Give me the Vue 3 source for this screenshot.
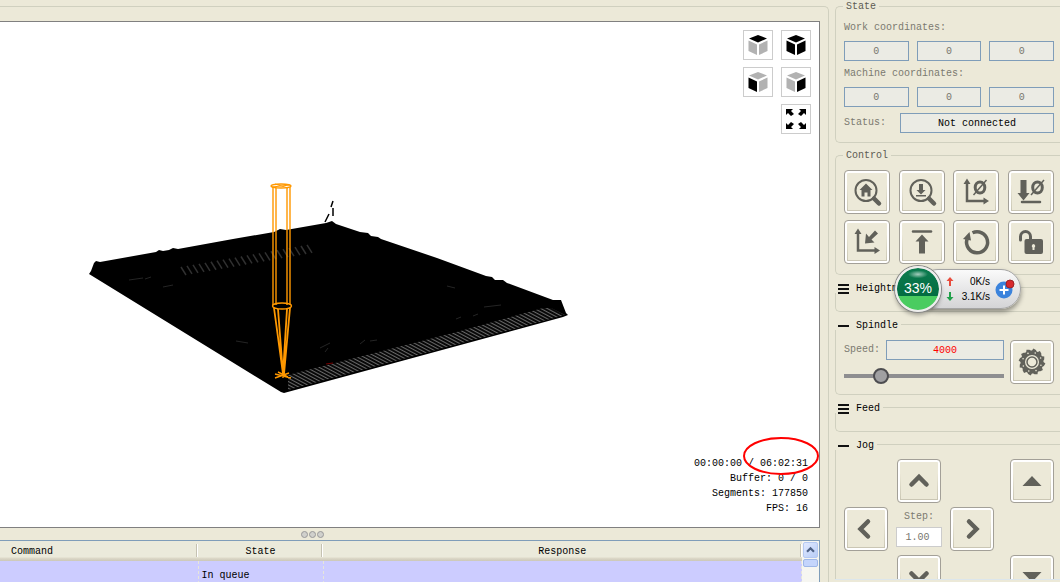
<script setup>
import { ref } from 'vue'

const work = ref(['0', '0', '0'])
const machine = ref(['0', '0', '0'])
const status = ref('Not connected')
const speed = ref('4000')
const speedPos = ref(20)
const step = ref('1.00')
const axes = ['X', 'Y', 'Z']

const teeth = Array.from({ length: 12 }, (_, i) => {
  const p = (r, d) => {
    const a = ((i * 30 + d) * Math.PI) / 180
    return (22 + r * Math.cos(a)).toFixed(1) + ',' + (22 + r * Math.sin(a)).toFixed(1)
  }
  return p(11.5, 0) + ' ' + p(13.5, 6) + ' ' + p(12.5, 18) + ' ' + p(11.5, 24)
}).join(' ')
const holes = Array.from({ length: 8 }, (_, i) => {
  const a = ((i * 45 + 20) * Math.PI) / 180
  return { x: 22 + 9.5 * Math.cos(a), y: 22 + 9.5 * Math.sin(a) }
})
const marks = Array.from({ length: 22 }, (_, i) => {
  const x = 181 + i * 6
  const y = 267 - i * 1.05
  return `M${x} ${y}l5 8`
}).join('')
</script>

<template>
  <div class="app">
    <main class="main">
      <div class="group">
        <section class="viewport">
          <svg class="scene" viewBox="0 22 819 505" aria-hidden="true">
            <defs>
              <pattern id="hatch" width="4" height="3" patternUnits="userSpaceOnUse" patternTransform="rotate(28)">
                <rect width="4" height="3" fill="#080808" />
                <rect width="4" height="1" fill="#686868" />
              </pattern>
            </defs>
            <path d="M89 274L91 271 94 263 96 261 100 262 156 252 159 250 163 251 169 250 173 248 178 249 233 239 274 232 280 229 286 230 326 223 332 221 336 224 360 232 368 233 371 236 378 237 381 239 437 258 486 276 492 277 495 280 503 280 507 283 553 300 561 300 566 313 568 315 563 317 284 393 281 392z" fill="#000" />
            <path d="M288 375L453 333 543 308 551 308 565 315 288 390z" fill="url(#hatch)" />
            <path :d="marks" stroke="#303030" stroke-width="1.5" />
            <path d="M129 280l14-2M145 279l6-2M163 287l10-2M236 341l12 2M320 348l10-5M325 352l3-4M447 286l8 2M456 319l5-2M473 316l5-2M484 307l17-2M360 344l5-4M370 341l7-1" stroke="#252525" />
            <path d="M325 222l4-8M331 207l2-6M333 208v8" stroke="#000" stroke-width="1.5" />
            <path d="M326 364l7-1" stroke="#700" />
            <g fill="none" stroke="#ff9800" stroke-width="1.4">
              <ellipse cx="281" cy="186" rx="10" ry="2" />
              <path d="M272 187l18-2M275 184l13 4" stroke-width="1" />
              <path d="M273 187V305M276 188V305M287 188V305M290 187V305" />
              <ellipse cx="282" cy="306" rx="9.5" ry="3" />
              <path d="M274 308l9 66M278 309l5 65M287 309l-4 65M290 308l-6 66" stroke-width="1.8" />
              <path d="M275 374l16 4M275 378l14-5M283 370v8M278 372l10 5" />
            </g>
          </svg>

          <div class="views">
            <button class="view" aria-label="Top view"><svg viewBox="0 0 28 28"><path d="M14 4l9 3.500-9 4-9-4z" fill="#000" /><path d="M4.500 9.500l8.500 4v10.500l-8.500-4z M23.500 9.500l-8.500 4v10.500l8.500-4z" fill="#b2b2b2" /></svg></button>
            <button class="view" aria-label="Isometric view"><svg viewBox="0 0 28 28"><path d="M14 4l9 3.500-9 4-9-4z M4.500 9.500l8.500 4v10.500l-8.500-4z M23.500 9.500l-8.500 4v10.500l8.500-4z" fill="#000" /></svg></button>
            <button class="view" aria-label="Front view"><svg viewBox="0 0 28 28"><path d="M14 4l9 3.500-9 4-9-4z M23.500 9.500l-8.500 4v10.500l8.500-4z" fill="#b2b2b2" /><path d="M4.500 9.500l8.500 4v10.500l-8.500-4z" fill="#000" /></svg></button>
            <button class="view" aria-label="Left view"><svg viewBox="0 0 28 28"><path d="M14 4l9 3.500-9 4-9-4z M4.500 9.500l8.500 4v10.500l-8.500-4z" fill="#b2b2b2" /><path d="M23.500 9.500l-8.500 4v10.500l8.500-4z" fill="#000" /></svg></button>
            <button class="view fit" aria-label="Fit"><svg viewBox="0 0 28 28"><path d="M4 4h7l-2 2 3 3-3 2-3-3-2 2zM24 4h-7l2 2-3 3 3 2 3-3 2 2zM4 24h7l-2-2 3-3-3-2-3 3-2-2zM24 24h-7l2-2-3-3 3-2 3 3 2-2z" fill="#000" /></svg></button>
          </div>

          <div class="stats">
            <div>00:00:00 / 06:02:31</div>
            <div>Buffer: 0 / 0</div>
            <div>Segments: 177850</div>
            <div>FPS: 16</div>
          </div>
          <svg class="mark" viewBox="0 0 76 38" aria-hidden="true"><ellipse cx="38" cy="19" rx="37" ry="18" fill="none" stroke="#f00" stroke-width="2" /></svg>
        </section>

        <div class="splitter"><i></i><i></i><i></i></div>

        <section class="console">
          <table>
            <colgroup><col class="c1"><col class="c2"><col></colgroup>
            <thead><tr><th class="first">Command</th><th>State</th><th>Response</th></tr></thead>
            <tbody><tr><td></td><td>In queue</td><td></td></tr></tbody>
          </table>
          <div class="scroll">
            <button class="up" aria-label="Scroll up"><svg viewBox="0 0 15 15"><path d="M3.500 9.500l4-4 4 4" fill="none" stroke="#4d6185" stroke-width="2.500" /></svg></button>
            <div class="thumb"></div>
          </div>
        </section>
      </div>
    </main>

    <aside class="side">
      <fieldset>
        <legend>State</legend>
        <div class="caption">Work coordinates:</div>
        <div class="triple"><input v-for="(a, i) in axes" :key="a" v-model="work[i]" :aria-label="'Work ' + a" readonly></div>
        <div class="caption">Machine coordinates:</div>
        <div class="triple"><input v-for="(a, i) in axes" :key="a" v-model="machine[i]" :aria-label="'Machine ' + a" readonly></div>
        <div class="status"><label for="status">Status:</label><input id="status" v-model="status" class="dark" readonly></div>
      </fieldset>

      <fieldset class="control">
        <legend>Control</legend>
        <div class="buttons">
          <button class="btn" aria-label="Home"><svg viewBox="0 0 46 44"><circle cx="22" cy="20.500" r="10.500" class="s2" /><path d="M30 28.500l5 5" class="s4" /><path d="M22 13.500l6.500 6.500h-2v6.500h-3v-4h-3v4h-3v-6.500h-2z" /></svg></button>
          <button class="btn" aria-label="Z probe"><svg viewBox="0 0 46 44"><circle cx="22" cy="20.500" r="10.500" class="s2" /><path d="M30 28.500l5 5" class="s4" /><path d="M20 14h4v6h2.500l-4.500 4.500-4.500-4.500h2.500zM17 25h10v1.500h-10z" /></svg></button>
          <button class="btn" aria-label="Zero XY"><svg viewBox="0 0 46 44"><path d="M14 13v18h18" class="s25" /><path d="M14 8.500l3.500 5.500h-7zM36 31l-5.500 3.500v-7z" /><ellipse cx="27" cy="17.500" rx="4.800" ry="5.500" class="s3" /><path d="M20.500 25l13-15" class="s15" /></svg></button>
          <button class="btn" aria-label="Zero Z"><svg viewBox="0 0 46 44"><path d="M12.500 10h6v13h3l-6 7.500-6-7.500h3z" /><path d="M14 32h18" class="s25" /><ellipse cx="29.500" cy="17.500" rx="4.800" ry="5.500" class="s3" /><path d="M23 25l13-15" class="s15" /></svg></button>
          <button class="btn" aria-label="Restore origin"><svg viewBox="0 0 46 44"><path d="M14 13v17.500h18" class="s25" /><path d="M14 8.500l3.500 5.500h-7zM36 30.500l-5.500 3.500v-7z" /><path d="M31 10.500l3 3-6.500 6 3 3-9.500 1 1-10 3 3.500z" /></svg></button>
          <button class="btn" aria-label="Safe position"><svg viewBox="0 0 46 44"><path d="M14 11.500h18" class="s25" /><path d="M23 14.500l6.500 7h-3.500v12h-6v-12h-3.500z" /></svg></button>
          <button class="btn" aria-label="Reset"><svg viewBox="0 0 46 44"><path d="M19.500 12.800a10.500 10.500 0 1 1-5.500 6.500" class="s35" /><path d="M16.500 12l1.500 8.500-8-1.500z" /></svg></button>
          <button class="btn" aria-label="Unlock"><svg viewBox="0 0 46 44"><path d="M12.500 20v-3.500a5 5 0 0 1 10 0v5" class="s3" /><rect x="16.500" y="19" width="18.500" height="15" rx="2" /><path d="M25.500 24a2 2 0 0 1 1 3.500v2.500h-2v-2.500a2 2 0 0 1 1-3.500z" fill="#ece9d8" /></svg></button>
        </div>
      </fieldset>

      <fieldset class="fold closed">
        <legend><button class="toggle"><i class="bars"></i>Heightm</button></legend>
      </fieldset>

      <fieldset class="fold">
        <legend><button class="toggle"><i class="dash"></i>Spindle</button></legend>
        <div class="spindle">
          <div class="speed">
            <label for="speed">Speed:</label>
            <input id="speed" v-model="speed" class="red">
            <input v-model="speedPos" type="range" min="0" max="100" aria-label="Spindle speed">
          </div>
          <button class="btn sq" aria-label="Spindle on"><svg viewBox="0 0 44 44"><polygon :points="teeth" /><circle v-for="(h, i) in holes" :key="i" :cx="h.x" :cy="h.y" r="0.8" fill="#ece9d8" /><circle cx="22" cy="22" r="7" fill="#ece9d8" /><circle cx="22" cy="22" r="5" class="s15" /></svg></button>
        </div>
      </fieldset>

      <fieldset class="fold closed">
        <legend><button class="toggle"><i class="bars"></i>Feed</button></legend>
      </fieldset>

      <fieldset class="fold jogbox">
        <legend><button class="toggle"><i class="dash"></i>Jog</button></legend>
        <div class="jog">
          <button class="btn sq yp" aria-label="Y+"><svg viewBox="0 0 44 44"><path d="M14.500 25.500l7.500-7.500 7.500 7.500" class="s4" /></svg></button>
          <button class="btn sq zp" aria-label="Z+"><svg viewBox="0 0 44 44"><path d="M22 17l9.500 10h-19z" /></svg></button>
          <button class="btn sq xm" aria-label="X-"><svg viewBox="0 0 44 44"><path d="M24 14.500l-7.500 7.500 7.500 7.500" class="s4" /></svg></button>
          <div class="step"><label for="step">Step:</label><input id="step" v-model="step"></div>
          <button class="btn sq xp" aria-label="X+"><svg viewBox="0 0 44 44"><path d="M19 14.500l7.500 7.500-7.500 7.500" class="s4" /></svg></button>
          <button class="btn sq ym" aria-label="Y-"><svg viewBox="0 0 44 44"><path d="M14.500 18.500l7.500 7.500 7.500-7.500" class="s4" /></svg></button>
          <button class="btn sq zm" aria-label="Z-"><svg viewBox="0 0 44 44"><path d="M22 27l9.500-10h-19z" /></svg></button>
        </div>
      </fieldset>

      <div class="meter">
        <div class="ball">33%</div>
        <div class="rates">
          <svg viewBox="0 0 8 9"><path d="M4 0l3.500 4h-2.500v5h-2v-5h-2.500z" fill="#e84c3d" /></svg><span>0K/s</span>
          <svg viewBox="0 0 8 9"><path d="M4 9l3.500-4h-2.500v-5h-2v5h-2.500z" fill="#21a04b" /></svg><span>3.1K/s</span>
        </div>
        <svg class="plus" viewBox="0 0 20 20"><circle cx="9" cy="11" r="8.500" fill="#3b83dc" /><path d="M9 6.500v9M4.500 11h9" stroke="#fff" stroke-width="2" /><circle cx="15" cy="5" r="4" fill="#d8282c" stroke="#9c2126" /></svg>
      </div>
    </aside>
  </div>
</template>

<style>
html, body { margin: 0; overflow: hidden; }
</style>

<style scoped>
* { box-sizing: border-box; }
.app {
  height: 100vh;
  display: flex;
  background: #ece9d8;
  color: #000;
  font: 10px/12px "Liberation Mono", monospace;
  overflow: hidden;
}
button, input { font: inherit; color: inherit; margin: 0; padding: 0; }
svg { display: block; }
.main { flex: 1; min-width: 0; padding: 6px 6px 0 0; }
.group {
  height: 100%;
  display: flex;
  flex-direction: column;
  padding: 14px 8px 0 0;
  border-top: 1px solid #d0d0bf;
  border-right: 1px solid #d0d0bf;
  border-top-right-radius: 5px;
}
.viewport {
  flex: 1;
  min-height: 0;
  position: relative;
  background: #fff;
  border: 1px solid #808080;
  border-left: 0;
}
.scene { position: absolute; inset: 0; width: 100%; height: 100%; }
.views {
  position: absolute;
  top: 8px;
  right: 8px;
  display: grid;
  grid-template-columns: 30px 30px;
  gap: 7px 8px;
}
.view { width: 30px; height: 30px; border: 1px solid #ccc; background: #fff; }
.view svg { width: 28px; height: 28px; }
.fit { grid-column: 2; }
.stats { position: absolute; right: 11px; bottom: 11px; text-align: right; line-height: 15px; }
.mark { position: absolute; right: 0; bottom: 52px; width: 76px; height: 38px; }
.splitter { height: 12px; display: flex; align-items: center; gap: 1px; padding-left: 301px; }
.splitter i { width: 7px; height: 7px; border: 1px solid #999; border-radius: 50%; background: #d0d0cc; }
.console {
  flex: 0 0 42px;
  display: flex;
  align-items: flex-start;
  overflow: hidden;
  border-top: 1px solid #7f9db9;
  border-right: 1px solid #7f9db9;
}
table { flex: 1; table-layout: fixed; border-collapse: collapse; background: #ccf; }
.c1 { width: 198px; }
.c2 { width: 125px; }
th {
  height: 20px;
  padding: 2px 0 0;
  font-weight: normal;
  background: linear-gradient(#c5c2b2, #c5c2b2) right 1px top 3px / 1px 13px no-repeat, linear-gradient(#fff, #fff) right 0 top 3px / 1px 13px no-repeat, linear-gradient(#ebeadb 16px, #dedac9 17px, #cbc7b8 20px);
}
.first { text-align: left; padding-left: 11px; }
td { height: 28px; padding: 2px 0 0 3px; border-right: 1px dashed #e6e6da; }
.scroll { width: 17px; height: 42px; padding: 1px; background: #f6f6f1; }
.up { display: block; width: 15px; height: 16px; border: 1px solid #b5c9f2; border-radius: 2px; background: linear-gradient(135deg, #e0e9ff, #b8cdf7); }
.up svg { width: 13px; height: 14px; }
.thumb { height: 8px; margin-top: 1px; border: 1px solid #9eb7e8; border-radius: 2px; background: #c4d5fc; }

.side {
  width: 225px;
  height: calc(100vh - 2px);
  position: relative;
  display: flex;
  flex-direction: column;
  gap: 6px;
  overflow: hidden;
  border-bottom: 1px solid #dce6ec;
}
fieldset {
  flex: none;
  min-width: 0;
  margin: 0;
  padding: 10px 6px 9px 8px;
  border: 1px solid #d0d0bf;
  border-right: 0;
  border-radius: 5px 0 0 5px;
  color: #7b7a70;
}
legend { height: 12px; padding: 0 3px; margin-left: -1px; color: #5c5b53; line-height: 14px; }
.caption { margin-bottom: 7px; }
.triple { display: grid; grid-template-columns: repeat(3, 1fr); gap: 8px; margin-bottom: 7px; }
.triple:nth-of-type(4) { margin-bottom: 6px; }
input {
  min-width: 0;
  width: 100%;
  height: 20px;
  border: 1px solid #7f9db9;
  border-radius: 0;
  background: #ebebe4;
  color: #77766d;
  text-align: center;
}
.dark { color: #000; }
.red { color: #f00; }
.status { display: grid; grid-template-columns: 48px 1fr; gap: 8px; align-items: center; }
.control { padding-top: 9px; padding-bottom: 10px; }
.buttons { display: grid; grid-template-columns: repeat(4, 46px); justify-content: space-between; gap: 6px 0; }
.btn {
  position: relative;
  width: 46px;
  height: 44px;
  border: 1px solid #a3a098;
  border-radius: 4px;
  background: #ece9d8;
  box-shadow: inset 0 0 0 2px #fff;
}
.btn::after {
  content: "";
  position: absolute;
  inset: 2px;
  border: 1px solid #c9c5b2;
  border-top: 0;
  mask-image: linear-gradient(transparent 30%, #000);
}
.btn svg { margin: -1px; width: 46px; height: 44px; fill: #61615a; }
.btn.sq, .btn.sq svg { width: 44px; }
.s15, .s2, .s25, .s3, .s35, .s4 { fill: none; stroke: #61615a; }
.s15 { stroke-width: 1.5; }
.s2 { stroke-width: 2; }
.s25 { stroke-width: 2.5; stroke-linecap: round; }
.s3 { stroke-width: 3; stroke-linecap: round; }
.s35 { stroke-width: 3.5; }
.s4 { stroke-width: 4.5; stroke-linecap: round; }
.fold { padding-bottom: 10px; border-top-left-radius: 0; }
.jogbox { padding-top: 9px; }
.closed { padding: 18px 0 0; }
.fold legend { margin-left: -9px; }
.closed legend { margin-left: -1px; }
.toggle { display: flex; align-items: center; gap: 7px; border: 0; background: none; color: #000; line-height: 16px; }
.bars { width: 11px; height: 10px; background: linear-gradient(#111 2px, transparent 2px 4px, #111 4px 6px, transparent 6px 8px, #111 8px); }
.dash { width: 11px; height: 2px; background: #111; }
.spindle { display: flex; gap: 6px; }
.speed { flex: 1; display: grid; grid-template-columns: 34px 1fr; gap: 8px; align-items: center; }
input[type="range"] { grid-column: 1 / 3; height: 16px; border: 0; background: none; appearance: none; }
input[type="range"]::-webkit-slider-runnable-track { height: 4px; background: #8e8e90; }
input[type="range"]::-webkit-slider-thumb { appearance: none; width: 16px; height: 16px; margin-top: -6px; border: 2px solid #4d4d50; border-radius: 50%; background: #a0a0a2; }
.jog {
  display: grid;
  grid-template: "a yp b zp" 44px "xm st xp d" 44px "e ym f zm" 44px / 44px 46px 44px 1fr;
  gap: 4px 8px;
}
.yp { grid-area: yp; } .zp { grid-area: zp; } .xm { grid-area: xm; } .xp { grid-area: xp; }
.ym { grid-area: ym; } .zm { grid-area: zm; }
.yp, .ym { justify-self: center; }
.zp, .zm { justify-self: end; }
.step { grid-area: st; display: flex; flex-direction: column; justify-content: space-between; padding: 4px 0; text-align: center; }
.step input { border-color: #ccc; background: #fff; padding-right: 3px; }

.meter {
  position: absolute;
  left: 83px;
  top: 269px;
  width: 103px;
  height: 40px;
  display: flex;
  align-items: center;
  gap: 5px;
  padding: 0 5px 0 0;
  border: 1px solid #a4a4a4;
  border-radius: 20px;
  background: linear-gradient(#fafafa, #d4d4d6);
  box-shadow: 0 3px 5px #0006;
  color: #000;
  font-family: "Liberation Sans", sans-serif;
}
.ball {
  flex: none;
  width: 46px;
  height: 46px;
  margin-left: -24px;
  border: 2px solid #eee;
  border-radius: 50%;
  background: radial-gradient(ellipse 10px 4px at 50% 15%, #ffffffa0, transparent) padding-box, linear-gradient(#0c7c50, #036c41 67%, #4acc60 67%) padding-box;
  box-shadow: 0 0 0 1px #888, 0 3px 4px #0005;
  color: #fff;
  font-size: 14px;
  line-height: 41px;
  text-align: center;
}
.rates { flex: 1; display: grid; grid-template-columns: 8px 1fr; align-items: center; line-height: 15px; text-align: right; }
.rates svg { width: 8px; height: 9px; }
.plus { flex: none; width: 20px; height: 20px; }
</style>
